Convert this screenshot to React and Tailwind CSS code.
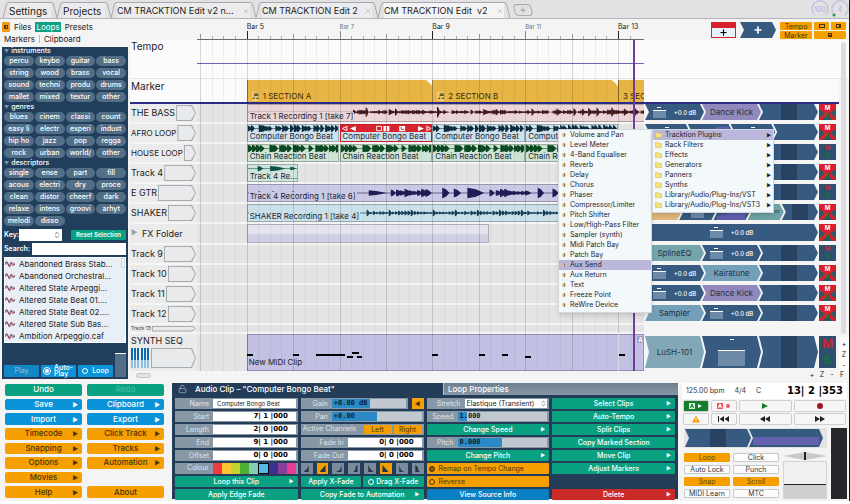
import { Fragment } from 'react';
import clsx from 'clsx';
import { ChevronsUpDown, LockOpen, Plus, X } from 'lucide-react';

const FIRST_BAR = 3.93;
const BAR_SPAN = 9.63;
const barPos = (bar) => `${((bar - FIRST_BAR) / BAR_SPAN) * 100}%`;
const barWidth = (bars) => `${(bars / BAR_SPAN) * 100}%`;

const LIBRARY = [
    { title: 'instruments', tags: ['percu', 'keybo', 'guitar', 'bass', 'string', 'wood', 'brass', 'vocal', 'sound', 'techni', 'produ', 'drums', 'mallet', 'mixed', 'textur', 'other'] },
    { title: 'genres', tags: ['blues', 'cinem', 'classi', 'count', 'easy li', 'electr', 'experi', 'indust', 'hip ho', 'jazz', 'pop', 'regga', 'rock', 'urban', 'world/', 'other'] },
    { title: 'descriptors', tags: ['single', 'ense', 'part', 'fill', 'acous', 'electri', 'dry', 'proce', 'clean', 'distor', 'cheerf', 'dark', 'relaxe', 'intens', 'groovi', 'arhyt', 'melodi', 'disso'] },
];

const FILES = ['Abandoned Brass Stab...', 'Abandoned Orchestral...', 'Altered State Arpeggi...', 'Altered State Beat 01....', 'Altered State Beat 02....', 'Altered State Sub Bas...', 'Ambition Arpeggio.caf'];

const PLUGINS = ['Volume and Pan', 'Level Meter', '4-Band Equaliser', 'Reverb', 'Delay', 'Chorus', 'Phaser', 'Compressor/Limiter', 'Pitch Shifter', 'Low/High-Pass Filter', 'Sampler (synth)', 'Midi Patch Bay', 'Patch Bay', 'Aux Send', 'Aux Return', 'Text', 'Freeze Point', 'ReWire Device'];

const FOLDERS = ['Tracktion Plugins', 'Rack Filters', 'Effects', 'Generators', 'Panners', 'Synths', 'Library/Audio/Plug-Ins/VST', 'Library/Audio/Plug-Ins/VST3'];

// a wave is a list of [x, amplitude, decay length]
const noise = (n) => {
    const v = Math.sin(n * 127.1 + 3.7) * 43758.5453;
    return v - Math.floor(v);
};

const bongoHits = [0, 3, 11, 13, 15, 18, 21, 28, 31, 35, 38, 43, 47, 50, 55, 58, 61, 67, 70, 74, 79, 82, 85, 89].map((x, i) => [x, 3 + noise(i) * 2, 4]);
const chainHits = [0, 4, 8, 12, 22, 24, 26, 32, 34, 36, 40, 46, 48, 50, 54, 62, 69, 72, 74, 78, 83, 86, 90].map((x, i) => [x, 4 + noise(i + 30), 5]);

const bassHits = [];
for (let x = 100; x < 396; x += 2) {
    if ([114, 132, 190, 192, 210, 214, 286, 288, 312, 372].includes(x)) continue;
    bassHits.push([x, 1 + noise(x) * (noise(x + 9) > 0.85 ? 6 : 2), 3]);
}
const guitarHits = [[10, 2, 4], [23, 2, 4], [42, 2, 4], [115, 3, 17], [136, 4, 5], [185, 6, 7], [196, 5, 7], [209, 6, 16], [230, 4, 5], [276, 6, 6], [290, 5, 6], [304, 6, 10], [318, 3, 5], [370, 5, 6], [384, 4, 8]];
for (let x = 141; x < 172; x += 4) guitarHits.push([x, 2 + noise(x) * 3, 6]);
for (let x = 236; x < 266; x += 4) guitarHits.push([x, 2 + noise(x) * 3, 6]);
const shakerHits = [];
for (let x = 113; x < 396; x += 3) shakerHits.push([x, x % 21 === 8 ? 4 : 1 + noise(x) * 2, 3]);

const MS_ON = 'on';
const MS_OFF = 'off';

const TRACKS = [
    {
        name: 'THE BASS', ms: MS_OFF, rack: [{ kind: 'vol' }, { kind: 'plugin', label: 'Dance Kick', color: 'bg-[#9188bd]' }, { kind: 'meter' }],
        clips: [{ at: 5, len: 9, label: 'Track 1 Recording 1 [take 7]', color: 'bg-[#ecd5d8]', ink: '#421a1c', hits: bassHits, span: 396, mid: 8 }],
    },
    {
        name: 'AFRO LOOP', small: true, ms: MS_OFF, rack: [{ kind: 'fader' }, { kind: 'curve' }, { kind: 'fader' }, { kind: 'blank' }],
        clips: [5, 7, 9, 11].map((at) => ({ at, len: 2, label: 'Computer Bongo Beat', color: 'bg-[#cfe2ec]', ink: '#0d2c40', hits: bongoHits, span: 93, mid: 4, selected: at === 7 })),
    },
    {
        name: 'HOUSE LOOP', small: true, ms: MS_ON, rack: [{ kind: 'vol' }, { kind: 'blank' }, { kind: 'meter' }],
        clips: [5, 7, 9, 11].map((at) => ({ at, len: 2, label: 'Chain Reaction Beat', color: 'bg-[#cfe4d4]', ink: '#0b4a20', hits: chainHits, span: 93, mid: 4 })),
    },
    {
        name: 'Track 4', ms: MS_OFF, rack: [{ kind: 'vol' }, { kind: 'plugin', label: '', color: 'bg-[#6fa3a8]' }, { kind: 'meter' }],
        clips: [{ at: 5, len: 1.1, label: 'Track 4 Re...', color: 'bg-[#cfe5e0]', ink: '#0d5245', hits: [[10, 3, 6], [23, 3, 16], [44, 2, 6]], span: 51, mid: 4 }],
    },
    {
        name: 'E GTR', ms: MS_ON, rack: [{ kind: 'vol' }, { kind: 'plugin', label: '', color: 'bg-[#6fa3a8]' }, { kind: 'meter' }],
        clips: [{ at: 5, len: 9, label: 'Track 4 Recording 1 [take 6]', color: 'bg-[#cbcae6]', ink: '#1f1c56', hits: guitarHits, span: 396, mid: 9 }],
    },
    {
        name: 'SHAKER', ms: MS_OFF, rack: [{ kind: 'plugin', label: '', color: 'bg-[#e3b77c]' }, { kind: 'fader' }, { kind: 'curve' }, { kind: 'plugin', label: 'Compressor', tiny: true, color: 'bg-[#6fa3a8]' }, { kind: 'meter' }],
        clips: [{ at: 5, len: 9, label: 'SHAKER Recording 1 [take 4]', color: 'bg-[#cbe1ea]', ink: '#143c54', hits: shakerHits, span: 396, mid: 9 }],
    },
    { name: 'FX Folder', folder: true, ms: MS_OFF, rack: [{ kind: 'vol' }], clips: [{ at: 5, len: 5.22, ghost: true }] },
    { name: 'Track 9', ms: MS_ON, rack: [{ kind: 'plugin', label: 'SplineEQ', color: 'bg-[#74a5ad]' }, { kind: 'vol' }, { kind: 'meter' }], clips: [] },
    { name: 'Track 10', ms: MS_OFF, rack: [{ kind: 'vol' }, { kind: 'plugin', label: 'Kairatune', color: 'bg-[#739fb8]' }, { kind: 'meter' }], clips: [] },
    { name: 'Track 11', ms: MS_OFF, rack: [{ kind: 'vol' }, { kind: 'plugin', label: 'Dance Kick', color: 'bg-[#9188bd]' }, { kind: 'meter' }], clips: [] },
    { name: 'Track 12', ms: MS_OFF, rack: [{ kind: 'plugin', label: 'Sampler', color: 'bg-[#739fb8]' }, { kind: 'vol' }, { kind: 'meter' }], clips: [] },
];

const NOTES = [[5, 0.13, 20], [6, 0.13, 20], [6.5, 0.62, 20], [7.17, 0.13, 22], [7.28, 0.14, 18], [7.37, 0.12, 22], [9, 0.13, 20], [10, 0.13, 20], [10.5, 0.13, 20], [11, 0.13, 22], [13.02, 0.13, 20]];

function Wave({ hits, span, mid, ink }) {
    return (
        <svg className="absolute inset-0 w-full h-full" viewBox={`0 0 ${span} 18`} preserveAspectRatio="none" aria-hidden="true">
            <path d={`M0 ${mid}H${span}`} stroke={ink} strokeWidth="1" opacity="0.6" />
            <path fill={ink} d={hits.map(([x, a, l]) => `M${x} ${mid - a}L${x + l / 2} ${mid - a * 0.7}L${x + l} ${mid}L${x + l / 2} ${mid + a * 0.7}L${x} ${mid + a}Z`).join('')} />
        </svg>
    );
}

function EdgeLeft() {
    return (
        <svg className="w-[6px] h-full shrink-0" viewBox="0 0 6 16" preserveAspectRatio="none" aria-hidden="true">
            <path d="M0 16L3.5 2Q4 0.5 6 0.5" fill="none" stroke="#a9a9ab" />
        </svg>
    );
}

function Tab({ label, active, closable, className }) {
    return (
        <div className={clsx('flex h-4 min-w-0', className)}>
            <EdgeLeft />
            <div className={clsx('flex-1 min-w-0 flex items-center justify-between border-t border-[#a9a9ab]', active ? 'bg-[#f4f4f4]' : 'bg-[#ececee]')}>
                <button className={clsx('leading-3 text-[#222] whitespace-pre', closable ? 'text-[9px]' : 'text-[10px]')}>{label}</button>
                {closable && <button aria-label="Close tab"><X className="w-2 h-2 text-[#b5b5b5]" /></button>}
            </div>
            <div className="-scale-x-100 flex"><EdgeLeft /></div>
        </div>
    );
}

function Gauge({ value, tick }) {
    return (
        <div className="relative w-[18px] h-[18px] flex items-center justify-center">
            <svg className="absolute inset-0 w-full h-full" viewBox="0 0 18 18" aria-hidden="true">
                <path d="M4 15A8 8 0 1 1 14 15" fill="none" stroke="#b3b0d6" strokeWidth={tick ? 2 : 1} strokeDasharray={tick ? '1 1' : 'none'} />
                {tick && <circle cx="3" cy="15" r="1.5" fill="#1f9a4a" />}
            </svg>
            <span className="text-[7px] leading-none text-[#b3b0d6]">{value}</span>
        </div>
    );
}

function Header() {
    return (
        <header className="flex items-end h-[19px] bg-[#e2e2e4] border-b border-[#b4b4b6]">
            <nav className="flex flex-1 min-w-0 pl-[3px]">
                <Tab label="Settings" className="w-[54px]" />
                <Tab label="Projects" className="w-[54px]" />
                <Tab label="CM TRACKTION Edit v2 n..." closable className="w-[145px]" />
                <Tab label="CM TRACKTION Edit 2" closable className="w-[122px]" />
                <Tab label="CM TRACKTION Edit  v2" active closable className="w-[132px]" />
                <button aria-label="New tab" className="ml-1 mt-0.5 w-[18px] h-3 skew-x-12 border border-[#a9a9ab] rounded-sm flex items-center justify-center">
                    <Plus className="w-2 h-2 text-[#8d8d90]" />
                </button>
            </nav>
            <div className="flex gap-0.5">
                <Gauge value="100" />
                <Gauge value="4" tick />
            </div>
        </header>
    );
}

function Sidebar() {
    return (
        <aside className="w-[128px] shrink-0 pl-0.5 flex flex-col">
            <div className="pt-0.5 h-7 text-[8px] leading-3 text-[#222]">
                <div className="flex items-center gap-1">
                    <span className="w-2 h-[10px] bg-[#ef9b0f] rounded-[1px] flex items-center justify-center">
                        <span className="w-1 h-1 border border-[#5c3a00] border-l-2"></span>
                    </span>
                    <button>Files</button>
                    <button className="bg-[#0aa182] text-white px-px h-[10px] leading-[10px]">Loops</button>
                    <button>Presets</button>
                </div>
                <div className="flex items-center gap-1 pl-0.5">
                    <button>Markers</button>
                    <span className="w-px h-2 bg-[#bbb]"></span>
                    <button>Clipboard</button>
                </div>
            </div>
            <div className="bg-[#213f5c] flex-1 flex flex-col px-0.5 text-white">
                {LIBRARY.map((group) => (
                    <section key={group.title}>
                        <h2 className="h-2 flex items-center text-[7px] leading-[8px] font-medium"><span className="text-[#7b93a8] pr-0.5 text-[5px]">▼</span>{group.title}</h2>
                        <div className="grid grid-cols-4 gap-x-px">
                            {group.tags.map((tag, idx) => (
                                <div key={idx} className="flex h-3 py-px">
                                    <button className="w-full h-[10px] rounded-full bg-[#536f88] text-[7px] leading-[10px] font-medium">{tag}</button>
                                </div>
                            ))}
                        </div>
                    </section>
                ))}
                <div className="flex items-center h-[14px] mt-px text-[7px] font-semibold">
                    <label htmlFor="key" className="w-[15px]">Key:</label>
                    <div className="relative w-[43px] h-3 bg-white">
                        <select id="key" className="appearance-none w-full h-full block"></select>
                        <ChevronsUpDown className="absolute right-px top-0.5 w-2 h-2 text-[#444] pointer-events-none" />
                    </div>
                    <button className="ml-auto w-[55px] h-[10px] bg-[#0aa182] rounded-[1px] text-[6px] leading-[10px]">Reset Selection</button>
                </div>
                <div className="flex items-center h-[14px] gap-0.5 text-[7px] font-semibold">
                    <label htmlFor="search">Search:</label>
                    <input id="search" className="flex-1 min-w-0 h-3 bg-white text-black" />
                </div>
                <div className="mt-px bg-[#e9eff6] border border-white flex">
                    <ul className="flex-1 min-w-0 text-[8px] leading-3 text-[#222]">
                        {FILES.map((file) => (
                            <li key={file} className="flex items-center h-3 gap-1 whitespace-nowrap">
                                <svg className="w-[10px] h-[8px] shrink-0" viewBox="0 0 10 8" fill="none" aria-hidden="true">
                                    <path d="M0 4Q1.500 -1 3 4T5.500 5.500T7.500 3T10 5" stroke="#c23a4a" />
                                    <path d="M0 5L2 2L4 6L6 2L8 6L10 3" stroke="#4a4a66" strokeWidth="0.7" />
                                </svg>
                                <button>{file}</button>
                            </li>
                        ))}
                    </ul>
                    <div className="w-1 h-[10px] border border-[#ccd3da] bg-[#f2f5f9]"></div>
                </div>
                <div className="flex-1 flex items-end gap-0.5 pb-0.5 text-[7px] leading-[6px] font-medium">
                    <button className="w-[35px] h-3 rounded-[1px] bg-[#1187c4] text-[#7dbbe0]">Play</button>
                    <label className="w-[35px] h-3 rounded-[1px] bg-[#0b93d9] flex items-center justify-center gap-1">
                        <input type="checkbox" defaultChecked className="appearance-none w-[6px] h-[6px] rounded-full border border-[#0b93d9] bg-white outline outline-white" />
                        <span>Auto-<br />Play</span>
                    </label>
                    <label className="w-[35px] h-3 rounded-[1px] bg-[#0b93d9] flex items-center justify-center gap-1">
                        <input type="checkbox" className="appearance-none w-[6px] h-[6px] rounded-full border border-white" />
                        Loop
                    </label>
                    <div className="relative flex-1 self-stretch pt-[10px]">
                        <div className="h-full bg-[#536f88] border-t border-white"></div>
                        <input type="range" aria-label="Preview level" className="absolute inset-0 w-full h-full opacity-0" />
                    </div>
                </div>
            </div>
        </aside>
    );
}

const ARROW = '[clip-path:polygon(0_0,calc(100%-4px)_0,100%_50%,calc(100%-4px)_100%,0_100%,4px_50%)]';

function InputSlot({ className }) {
    return (
        <div className={clsx('bg-[#a8abb0] p-px [clip-path:polygon(0_0,calc(100%-4px)_0,100%_50%,calc(100%-4px)_100%,0_100%)]', className)}>
            <div className="w-full h-full bg-[#e8eaec] [clip-path:polygon(0_0,calc(100%-4px)_0,100%_50%,calc(100%-4px)_100%,0_100%)]"></div>
        </div>
    );
}

function RackItem({ item, tall }) {
    const { kind, label, color, tiny } = item;
    return (
        <div className={clsx('flex-1 min-w-0 h-full flex items-center justify-center gap-2 -mr-0.5', ARROW, color || 'bg-[#375b80]')}>
            {kind === 'plugin' && <span className={clsx('text-[#23323f] whitespace-nowrap', tiny ? 'text-[5px]' : 'text-[8px]')}>{label}</span>}
            {(kind === 'vol' || kind === 'fader') && (
                <div className={clsx('flex flex-col items-center', tall ? 'w-[27px]' : 'w-[13px]')}>
                    <span className="w-1 h-px bg-white mb-0.5"></span>
                    <span className={clsx('w-full bg-[#6d8aa8] border-t border-white', tall ? 'h-4 mt-2' : 'h-2')}></span>
                </div>
            )}
            {kind === 'vol' && !tall && <span className="text-[6px] font-medium text-white whitespace-nowrap">+0.0 dB</span>}
            {kind === 'curve' && (
                <svg className="w-full h-full px-1" viewBox="0 0 30 16" preserveAspectRatio="none" aria-hidden="true">
                    <path d="M0 12L14 9Q20 0 30 3V16H0Z" fill="#5f5fae" />
                </svg>
            )}
            {kind === 'meter' && <div className="w-4 h-full bg-[#2a4262]"></div>}
        </div>
    );
}

function MuteSolo({ state, tall }) {
    const off = state === MS_OFF;
    return (
        <div className={clsx('relative w-[17px] shrink-0 ml-[3px] flex flex-col', off ? 'bg-[#2b5a62]' : 'bg-[#2d4f70]')}>
            {off && (
                <svg className="absolute inset-0 w-full h-full" viewBox="0 0 17 16" preserveAspectRatio="none" aria-hidden="true">
                    <path d="M0 0H17V5L11 9L17 14V16H14L8.500 11L3 16H0V14L6 9L0 5Z" fill="#d8202c" />
                </svg>
            )}
            <button className={clsx('relative flex-1 font-bold leading-none', tall ? 'text-[12px]' : 'text-[6px]', off ? 'text-white' : 'text-[#d8202c]')}>M</button>
            <button className={clsx('relative flex-1 font-bold leading-none', tall ? 'text-[12px]' : 'text-[6px]', 'text-[#16763a]')}>S</button>
        </div>
    );
}

function Clip({ clip }) {
    if (clip.ghost) {
        return (
            <div className="absolute inset-y-0 border border-[#aeb0be] bg-linear-to-b from-[#e4e4ea] from-50% to-[#d0d0e4] to-50%" style={{ left: barPos(clip.at), width: barWidth(clip.len) }}></div>
        );
    }
    return (
        <div className={clsx('absolute inset-y-0 border overflow-hidden', clip.color, clip.selected ? 'border-[#c4202c] z-10' : 'border-black/25')} style={{ left: barPos(clip.at), width: barWidth(clip.len) }}>
            <Wave {...clip} />
            {clip.selected && (
                <svg className="absolute inset-x-0 top-0 w-full h-[7px]" viewBox="0 0 92 8" preserveAspectRatio="none" aria-hidden="true">
                    <path d="M0 0H92V8H0Z" fill="#d8232e" />
                    <path d="M6 1.500V6.500L1.500 4ZM87 1.500V6.500L91 4Z" fill="none" stroke="#fff" />
                    <path d="M15 1V7L9 4ZM78 1V7L84 4ZM43 1H49V7H43ZM59 1H65V7H59Z" fill="#fff" />
                    <path d="M36 1.500H41V6.500H36Z" fill="#d8232e" stroke="#fff" />
                    <path d="M61 2V5H64M46 1V7" stroke="#d8232e" fill="none" />
                </svg>
            )}
            <span className={clsx('absolute left-px bottom-0 px-px text-[8px] leading-[9px] text-[#1d2733] whitespace-nowrap', clip.color)}>{clip.label}</span>
        </div>
    );
}

function TrackRow({ track }) {
    return (
        <div className={clsx('flex bg-[#f5f5f5]', track.folder ? 'h-[21px]' : 'h-5')}>
            <div className="w-[67px] shrink-0 mb-0.5 pl-px pr-px flex items-center gap-px bg-[#ebebeb]">
                {track.folder && <span className="w-[10px] text-[7px] text-[#a5a5a5]">▶</span>}
                <span className={clsx('whitespace-nowrap text-[#222]', track.small ? 'text-[8px]' : 'text-[9px]')}>{track.name}</span>
                {!track.folder && <InputSlot className="flex-1 h-4" />}
            </div>
            <div className="relative flex-1 min-w-0 mb-0.5 bg-[#e4e4e4] overflow-hidden">
                {track.clips.map((clip, idx) => <Clip key={idx} clip={clip} />)}
            </div>
            <div className="w-[195px] shrink-0 pl-px pr-[3px] pb-1 flex">
                {track.rack.map((item, idx) => <RackItem key={idx} item={item} />)}
                <MuteSolo state={track.ms} />
            </div>
        </div>
    );
}

function Ruler() {
    return (
        <div className="flex h-[21px]">
            <div className="w-[67px] shrink-0"></div>
            <div className="relative flex-1 min-w-0 border-b border-[#6b6b6b] text-[#222]">
                {Array.from({ length: 38 }, (_, i) => 4 + i / 4).map((bar) => (
                    <span key={bar} className={clsx('absolute bottom-0 w-px', (bar - 1) % 4 === 0 ? 'h-2 bg-[#222]' : (bar - 1) % 2 === 0 ? 'h-2 bg-[#8a8a8a]' : bar % 1 === 0 ? 'h-[5px] bg-[#999]' : 'h-[3px] bg-[#aaa]')} style={{ left: barPos(bar) }}></span>
                ))}
                {[5, 7, 9, 11, 13].map((bar) => (
                    <span key={bar} className={clsx('absolute bottom-2 leading-[9px] whitespace-nowrap', (bar - 1) % 4 === 0 ? 'text-[7px]' : 'text-[6px] text-[#6f7680]')} style={{ left: barPos(bar) }}>Bar {bar}</span>
                ))}
            </div>
            <div className="w-[205px] shrink-0 flex items-start gap-1 pt-[3px] pr-[3px] justify-end">
                <button aria-label="Add track" className="w-[25px] h-4 border border-[#d8232e] bg-[#e7f2fb] flex flex-col items-center">
                    <span className="w-full h-[5px] bg-[#d8232e]"></span>
                    <Plus className="w-[9px] h-[9px] text-black" strokeWidth={3} />
                </button>
                <button aria-label="Add plugin" className={clsx('w-9 h-4 bg-[#375b80] text-white flex items-center justify-center', ARROW)}>
                    <Plus className="w-[10px] h-[10px]" strokeWidth={4} />
                </button>
                <div className="w-[66px] grid grid-cols-[32px_15px_15px] gap-x-0.5 gap-y-px text-[7px] leading-[7px] text-[#4d3300]">
                    <button className="h-[8px] rounded-[1px] bg-[#f59f00]">Tempo</button>
                    <button aria-label="Clip view" className="rounded-[1px] bg-[#f59f00] flex items-center justify-center"><span className="w-[6px] h-1 border border-[#4d3300]"></span></button>
                    <button aria-label="Side view" className="rounded-[1px] bg-[#f59f00] flex items-center justify-center"><span className="w-[5px] h-1 border border-r-2 border-[#4d3300]"></span></button>
                    <button className="h-[8px] rounded-[1px] bg-[#f59f00]">Marker</button>
                    <button aria-label="Bottom view" className="col-span-2 rounded-[1px] bg-[#f59f00] flex items-center justify-center"><span className="w-1 h-1 border border-b-2 border-[#4d3300]"></span></button>
                </div>
            </div>
        </div>
    );
}

function GridLines() {
    return (
        <div className="absolute left-[67px] right-[205px] top-[21px] bottom-2 pointer-events-none">
            {Array.from({ length: 38 }, (_, i) => 4 + i / 4).map((bar) => (
                <span key={bar} className={clsx('absolute inset-y-0 w-px', bar % 1 === 0 ? 'bg-black/15' : 'bg-black/5')} style={{ left: barPos(bar) }}></span>
            ))}
            <span className="absolute inset-y-0 w-0.5 bg-[#6f3c97] z-20" style={{ left: barPos(13.33) }}></span>
        </div>
    );
}

function Menu({ items, active, icon, arrows, className }) {
    return (
        <ul role="menu" className={clsx('pb-0.5 bg-[#f3f8fb] border border-[#d2d8dc] shadow-md text-[7px] leading-[10px] text-[#1c2730]', className)}>
            {items.map((item) => (
                <li key={item} role="none">
                    <button role="menuitem" className={clsx('w-full h-[10px] flex items-center px-0.5 gap-[3px] text-left whitespace-nowrap', item === active && 'bg-[#bab6dc]')}>
                        {icon}
                        <span className="flex-1">{item}</span>
                        {arrows && <span className="text-[5px]">▶</span>}
                    </button>
                </li>
            ))}
        </ul>
    );
}

const plugIcon = (
    <svg className="w-[6px] h-[6px] shrink-0" viewBox="0 0 6 6" aria-hidden="true">
        <ellipse cx="3" cy="3" rx="1.800" ry="2.300" fill="#e0c98a" />
        <path d="M2.500 1.500H4V4.500H2.500L3.200 3Z" fill="#8a703c" />
    </svg>
);

const folderIcon = (
    <svg className="w-[7px] h-[6px] shrink-0" viewBox="0 0 7 6" aria-hidden="true">
        <path d="M0.500 0.500H3L4 1.500H6.500V5.500H0.500Z" fill="#f4e27c" stroke="#d8bf4a" strokeWidth="0.6" />
    </svg>
);

function Arranger() {
    return (
        <main className="relative flex-1 min-w-0 ml-0.5">
            <Ruler />
            <div className="relative">
                <div className="flex h-[39px] bg-[#fbfbfb] border-b border-[#e6e6e6]">
                    <div className="w-[67px] pl-px text-[10px] leading-[13px] text-[#222]">Tempo</div>
                    <div className="flex-1 mr-[205px] h-6 border-b border-[#6a64b4]"></div>
                </div>
                <div className="flex h-[23px] bg-[#fbfbfb] mr-[10px]">
                    <div className="w-[67px] shrink-0 pl-px text-[10px] leading-[15px] text-[#222]">Marker</div>
                    <div className="relative flex-1 overflow-hidden">
                        {[[5, '1 SECTION A'], [9, '2 SECTION B'], [13, '3 SEC']].map(([bar, label]) => (
                            <div key={bar} className="absolute top-px bottom-0 flex items-end gap-1 px-1 bg-[#e6b544] border-l border-[#9c7a28] [clip-path:polygon(0_0,calc(100%-6px)_0,100%_6px,100%_100%,0_100%)] text-[8px] leading-[12px] text-[#3a2b08]" style={{ left: barPos(bar), width: barWidth(4) }}>
                                {bar < 13 && <span className="w-[7px] h-[9px] mb-px bg-[#f0cd74] text-[8px] leading-[9px] font-['DejaVu_Sans',sans-serif]">♬</span>}
                                {label}
                            </div>
                        ))}
                    </div>
                    <div className="w-[195px] shrink-0"></div>
                </div>
                <div className="h-0.5 bg-[#2b2a86] mr-[10px]"></div>
                <div className="mr-[10px]">
                    {TRACKS.map((track) => <TrackRow key={track.name} track={track} />)}
                    <div className="flex h-[9px] bg-[#f5f5f5]">
                        <div className="w-[67px] shrink-0 mb-0.5 px-px flex items-center gap-px bg-[#ebebeb]">
                            <span className="text-[5px] leading-none text-[#333]">Track 13</span>
                            <InputSlot className="flex-1 h-[6px]" />
                        </div>
                        <div className="flex-1 mb-0.5 bg-[#e4e4e4]"></div>
                        <div className="w-[195px] shrink-0"></div>
                    </div>
                    <div className="flex h-[37px] bg-[#f5f5f5]">
                        <div className="w-[67px] shrink-0 pl-px pr-px bg-[#ebebeb]">
                            <div className="text-[9px] leading-[14px] text-[#222]">SYNTH SEQ</div>
                            <div className="flex h-5">
                                <div className="w-5 flex justify-between pr-px">
                                    {[0, 1, 2, 3, 4, 5].map((k) => <span key={k} className="w-[3px] bg-linear-to-b from-[#1268a8] from-60% to-[#8fbfe0] to-60% border-r border-[#e8f2fa]"></span>)}
                                </div>
                                <InputSlot className="flex-1 h-5" />
                            </div>
                        </div>
                        <div className="relative flex-1 min-w-0 bg-[#e4e4e4] overflow-hidden">
                            <div className="absolute inset-y-0 right-0 bg-[#c2c1e3] border border-[#8f8eb6]" style={{ left: barPos(5) }}></div>
                            {NOTES.map(([bar, len, y]) => <span key={bar} className="absolute h-0.5 bg-black" style={{ left: barPos(bar), width: barWidth(len), top: y }}></span>)}
                            <span className="absolute inset-y-0 w-px bg-white" style={{ left: barPos(13) }}></span>
                            <span className="absolute bottom-1 text-[8px] leading-[9px] text-[#222] pl-0.5" style={{ left: barPos(5) }}>New MIDI Clip</span>
                            <span className="absolute right-0 top-0.5 w-[7px] h-[7px] bg-[#9d9cc9] text-white text-[6px] leading-[7px] font-bold text-center">A</span>
                        </div>
                        <div className="w-[195px] shrink-0 pl-px pr-[3px] pt-0.5 pb-[3px] flex">
                            <RackItem tall item={{ kind: 'plugin', label: 'LuSH-101', color: 'bg-[#82a8b8]' }} />
                            <RackItem tall item={{ kind: 'vol' }} />
                            <RackItem tall item={{ kind: 'meter' }} />
                            <MuteSolo state={MS_ON} tall />
                        </div>
                    </div>
                </div>
                <div className="absolute right-[3px] top-[2px] w-[5px] h-[292px] rounded-full bg-[#dcdcdf]"></div>
                <div className="absolute right-0 bottom-0 w-[10px] h-[33px] text-[7px] leading-[11px] text-[#222] flex flex-col bg-[#fbfbfb]">
                    <button>+</button>
                    <button>Z</button>
                    <button>-</button>
                </div>
            </div>
            <div className="flex h-2 items-center justify-between pl-[6px] text-[7px] leading-[8px] text-[#222]">
                <span className="w-[15px] h-[5px] rounded-full border border-[#c5c5c8] bg-[#e4e4e6]"></span>
                <div className="flex gap-1 pr-1">
                    {['+', 'Z', '-', 'F'].map((k) => <button key={k} className="w-[6px]">{k}</button>)}
                </div>
            </div>
            <GridLines />
            <div className="absolute top-[110px] right-[75px] flex items-start z-30">
                <Menu items={PLUGINS} active="Aux Send" icon={plugIcon} className="w-[94px]" />
                <Menu items={FOLDERS} active="Tracktion Plugins" icon={folderIcon} arrows className="w-[122px]" />
            </div>
        </main>
    );
}

const MENU_BUTTONS = [
    ['Undo', 'bg-[#0aa182] text-white', false], ['Redo', 'bg-[#0aa182] text-[#3fbda2]', false],
    ['Save', 'bg-[#0b93d9] text-white', true], ['Clipboard', 'bg-[#0b93d9] text-white', true],
    ['Import', 'bg-[#0b93d9] text-white', true], ['Export', 'bg-[#0b93d9] text-white', true],
    ['Timecode', 'bg-[#f59f00] text-[#4d3300]', true], ['Click Track', 'bg-[#f59f00] text-[#4d3300]', true],
    ['Snapping', 'bg-[#f59f00] text-[#4d3300]', true], ['Tracks', 'bg-[#f59f00] text-[#4d3300]', true],
    ['Options', 'bg-[#f59f00] text-[#4d3300]', true], ['Automation', 'bg-[#f59f00] text-[#4d3300]', true],
    ['Movies', 'bg-[#f59f00] text-[#4d3300]', true], null,
    ['Help', 'bg-[#f59f00] text-[#4d3300]', true], ['About', 'bg-[#f59f00] text-[#4d3300]', false],
];

function Action({ label, arrow, color = 'bg-[#0aa182]' }) {
    return (
        <button className={clsx('relative w-full h-full rounded-[1px] text-white font-medium whitespace-nowrap', color)}>
            {label}
            {arrow && <span className="absolute right-1 inset-y-0 flex items-center text-[5px]">▶</span>}
        </button>
    );
}

function Field({ label, id, value, wide, plain }) {
    return (
        <div className="flex h-full min-w-0 bg-[#8797a6] pr-0.5 py-px">
            <label htmlFor={id} className={clsx('shrink-0 text-right pr-1 text-[#dfe5eb]', wide ? 'w-[47px]' : 'w-[38px]')}>{label}</label>
            <input id={id} defaultValue={value} className={clsx('flex-1 min-w-0 w-0 bg-white text-[#222]', plain ? 'text-[6px] pl-1' : "pr-2 text-right text-[7px] text-black font-bold font-['DejaVu_Sans',sans-serif]")} />
        </div>
    );
}

function ValueSlider({ label, id, value, fill }) {
    return (
        <div className="flex h-full min-w-0 bg-[#8797a6] pr-0.5 py-px">
            <label htmlFor={id} className="w-[31px] shrink-0 text-right pr-1 text-[#dfe5eb]">{label}</label>
            <div className="relative flex-1 bg-[#c2c8cf]">
                <div className="absolute inset-y-0 left-0 bg-[#2b8ac6]" style={{ width: fill }}></div>
                <span className="relative flex items-center h-full pl-0.5 text-[7px] text-[#0d2233] font-bold font-['DejaVu_Sans_Mono',monospace]">{value}</span>
                <input id={id} type="range" className="absolute inset-0 w-full h-full opacity-0" />
            </div>
        </div>
    );
}

const SWATCHES = ['bg-[#ee3b40]', 'bg-[#fdc530]', 'bg-[#c3d32f]', 'bg-[#4fb131]', 'bg-[#82cdb5]', 'bg-[#57b9ea] border border-black', 'bg-[#3c3090]', 'bg-[#8a4099]', 'bg-[#e63c93]'];

const FADES = ['M0 8Q5 5 6 0V8Z', 'M0 8L7 0V8Z', 'M0 8Q6 7 7 0V8Z', 'M1 8Q5 7 5 1L7 0V8Z', 'M1 8V0Q2 4 7 8Z', 'M0 8V0L7 8Z', 'M1 8V0Q2 7 7 8Z', 'M1 8V0Q4 1 5 7L7 8Z'];

function ClipPanel() {
    return (
        <section className="flex-1 min-w-0 bg-[#233d58] flex flex-col">
            <div className="flex h-[15px] text-white text-[8px] font-medium">
                <h2 className="w-[271px] flex items-center gap-2 pl-1.5"><LockOpen className="w-[9px] h-[10px] text-[#9fb0c0]" />Audio Clip – "Computer Bongo Beat"</h2>
                <h2 className="flex-1 flex items-center pl-1 bg-linear-to-b from-[#6d7e8e] to-[#8797a5] border-l border-[#b9c3cc]">Loop Properties</h2>
            </div>
            <div className="flex-1 grid grid-cols-4 gap-x-[3px] px-[3px] pt-[3px] pb-0.5 text-[7px] leading-[9px]">
                <div className="min-w-0 grid grid-cols-1 grid-rows-8 gap-y-0.5">
                    <Field label="Name" id="clip-name" value="Computer Bongo Beat" plain />
                    <Field label="Start" id="clip-start" value="7| 1 |000" />
                    <Field label="Length" id="clip-length" value="2| 0 |000" />
                    <Field label="End" id="clip-end" value="9| 1 |000" />
                    <Field label="Offset" id="clip-offset" value="0| 0 |000" />
                    <div className="flex bg-[#8797a6] pr-0.5">
                        <span className="w-[38px] shrink-0 text-right pr-1 text-[#dfe5eb]">Colour</span>
                        {SWATCHES.map((c) => <button key={c} aria-label="Clip colour" className={clsx('flex-1', c)}></button>)}
                    </div>
                    <Action label="Loop this Clip" arrow />
                    <Action label="Apply Edge Fade" />
                </div>
                <div className="min-w-0 grid grid-cols-1 grid-rows-8 gap-y-0.5">
                    <div className="flex gap-1">
                        <div className="flex-1"><ValueSlider label="Gain" id="gain" value="+0.00 dB" fill="52%" /></div>
                        <button aria-label="Mute clip" className="w-3 bg-[#f59f00] text-[6px] text-[#4d3300]">◀</button>
                    </div>
                    <ValueSlider label="Pan" id="pan" value="+0.00" fill="50%" />
                    <div className="flex gap-0.5 bg-[#8797a6] py-px pr-0.5 leading-[8px]">
                        <span className="flex-1 pl-0.5 text-[#dfe5eb] whitespace-nowrap">Active Channels</span>
                        <button className="w-7 bg-[#f59f00] text-[#4d3300]">Left</button>
                        <button className="w-7 bg-[#f59f00] text-[#4d3300]">Right</button>
                    </div>
                    <Field label="Fade In" id="fade-in" value="0| 0 |000" wide />
                    <Field label="Fade Out" id="fade-out" value="0| 0 |000" wide />
                    <div className="grid grid-cols-8 gap-x-1">
                        {FADES.map((d, idx) => (
                            <button key={d} aria-label="Fade shape" className={clsx('flex items-center justify-center', idx === 1 || idx === 5 ? 'bg-[#f59f00]' : 'bg-[#7a8b9b]')}>
                                <svg className="w-[7px] h-[7px]" viewBox="0 0 7 8" aria-hidden="true"><path d={d} fill="#233547" /></svg>
                            </button>
                        ))}
                    </div>
                    <div className="grid grid-cols-2 gap-x-0.5">
                        <Action label="Apply X-Fade" />
                        <label className="bg-[#0aa182] rounded-[1px] text-white font-medium flex items-center justify-center gap-0.5 whitespace-nowrap">
                            <input type="checkbox" className="appearance-none w-[6px] h-[6px] rounded-full border border-white" />Drag X-Fade
                        </label>
                    </div>
                    <Action label="Copy Fade to Automation" arrow />
                </div>
                <div className="min-w-0 grid grid-cols-1 grid-rows-8 gap-y-0.5">
                    <div className="relative flex min-w-0 bg-[#8797a6] pr-0.5 py-px">
                        <label htmlFor="stretch" className="w-[38px] shrink-0 text-right pr-1 text-[#dfe5eb]">Stretch</label>
                        <select id="stretch" className="appearance-none flex-1 min-w-0 bg-white text-[#222] pl-0.5 leading-[8px]"><option>Elastique (Transient)</option></select>
                        <ChevronsUpDown className="absolute right-0.5 top-0.5 w-[7px] h-[7px] text-[#444] pointer-events-none" />
                    </div>
                    <ValueSlider label="Speed" id="speed" value="1.000" fill="11%" />
                    <Action label="Change Speed" arrow />
                    <ValueSlider label="Pitch" id="pitch" value="0.000" fill="50%" />
                    <Action label="Change Pitch" arrow />
                    {['Remap on Tempo Change', 'Reverse'].map((label, idx) => (
                        <label key={label} className="bg-[#f59f00] rounded-[1px] text-[#4d3300] flex items-center gap-1 pl-0.5">
                            <input type="checkbox" defaultChecked={idx === 0} className="appearance-none w-[6px] h-[6px] rounded-full border border-[#4d3300] checked:bg-[#8a5c00]" />{label}
                        </label>
                    ))}
                    <Action label="View Source Info" color="bg-[#0a80c2]" />
                </div>
                <div className="min-w-0 grid grid-cols-1 grid-rows-8 gap-y-0.5">
                    <Action label="Select Clips" arrow />
                    <Action label="Auto-Tempo" arrow />
                    <Action label="Split Clips" arrow />
                    <Action label="Copy Marked Section" />
                    <Action label="Move Clip" arrow />
                    <Action label="Adjust Markers" arrow />
                    <span></span>
                    <Action label="Delete" arrow color="bg-[#cb2b27]" />
                </div>
            </div>
        </section>
    );
}

const TOGGLES = [['Loop', true], ['Click', false], ['Auto Lock', false], ['Punch', false], ['Snap', true], ['Scroll', true], ['MIDI Learn', false], ['MTC', false]];

function TransportButton({ label, children, className }) {
    return (
        <button aria-label={label} className={clsx('h-3 flex items-center justify-center border border-[#cfcfd2] rounded-[2px]', className || 'bg-[#f6f6f7]')}>
            <svg className="h-2 w-4" viewBox="0 0 16 8" aria-hidden="true">{children}</svg>
        </button>
    );
}

function Transport() {
    return (
        <section className="w-[167px] shrink-0 flex flex-col pr-0.5">
            <div className="flex items-center justify-between bg-white h-4 px-1 text-[7px] text-[#333]">
                <span>125.00 bpm</span>
                <span>4/4</span>
                <span>C</span>
                <span className="pl-4 text-[10px] leading-none font-bold text-black font-['DejaVu_Sans',sans-serif] whitespace-pre">13| 2 |353</span>
            </div>
            <div className="grid grid-cols-[26px_26px_1fr_1fr] gap-x-0.5 gap-y-px pt-px px-px">
                <TransportButton label="Automation read" className="bg-[#137f2c]">
                    <path d="M1 1H7V7H1Z" fill="#d8f0dc" /><path d="M2.500 6L4 2L5.500 6M3 4.500H5" stroke="#137f2c" fill="none" /><path d="M10 2L14 4L10 6Z" fill="#fff" />
                </TransportButton>
                <TransportButton label="Automation write">
                    <path d="M1 1H7V7H1Z" fill="#ef5a66" /><path d="M2.500 6L4 2L5.500 6M3 4.500H5" stroke="#fff" fill="none" /><circle cx="12" cy="4" r="2" fill="#ef5a66" />
                </TransportButton>
                <TransportButton label="Play"><path d="M5 1L11 4L5 7Z" fill="#137f2c" /></TransportButton>
                <TransportButton label="Record"><circle cx="8" cy="4" r="3" fill="#a01420" /></TransportButton>
                <TransportButton label="Panic"><path d="M8 0.500L12 7.500H4Z" fill="#f59f00" /><path d="M8 3V5.500" stroke="#fff" /></TransportButton>
                <TransportButton label="Return to start"><path d="M2 1H3V7H2ZM8 1V7L3.500 4ZM13 1V7L8.500 4Z" fill="#222" /></TransportButton>
                <TransportButton label="Rewind"><path d="M8 1V7L3 4ZM13 1V7L8 4Z" fill="#222" /></TransportButton>
                <TransportButton label="Fast forward"><path d="M3 1V7L8 4ZM8 1V7L13 4Z" fill="#222" /></TransportButton>
            </div>
            <div className="flex flex-1 mt-[3px] gap-1 pl-0.5">
                <div className="flex-1 min-w-0 flex flex-col">
                    <div className="flex h-5 bg-[#e3e3e4] p-px pr-1">
                        <RackItem item={{ kind: 'meter' }} />
                        <div className={clsx('flex-1 bg-[#375b80] flex items-end px-1 pb-0.5', ARROW)}><span className="w-full h-2 bg-[#6461ae]"></span></div>
                    </div>
                    <div className="flex flex-1 gap-1 pt-1">
                        <div className="grid grid-cols-[46px_46px] gap-x-[3px] gap-y-[3px] content-start pt-px text-[7px] leading-[7px]">
                            {TOGGLES.map(([label, on]) => (
                                <label key={label} className={clsx('h-[9px] rounded-[1px] border text-center', on ? 'bg-[#f59f00] border-[#f59f00] text-[#6b4800]' : 'bg-[#fdfdfd] border-[#c5c8cc] text-[#333]')}>
                                    <input type="checkbox" defaultChecked={on} className="sr-only" />{label}
                                </label>
                            ))}
                        </div>
                        <div className="flex-1 flex flex-col gap-px">
                            <svg className="w-full h-2" viewBox="0 0 44 8" preserveAspectRatio="none" aria-hidden="true"><path d="M0 4L22 0L44 4L22 8Z" fill="#c9c9cb" /><path d="M22 0V8" stroke="#222" strokeWidth="2" /></svg>
                            <div className="relative flex-1 border border-[#d4d4d6] bg-linear-to-b from-[#f0f0f1] from-60% to-[#cfcfd1] to-60%">
                                <span className="absolute inset-x-0 top-[60%] h-px bg-[#222]"></span>
                                <input type="range" aria-label="Master level" className="absolute inset-0 w-full h-full opacity-0" />
                            </div>
                        </div>
                    </div>
                </div>
                <div className="w-4 bg-[#26272a]"></div>
            </div>
        </section>
    );
}

export default function App() {
    return (
        <div className="flex bg-[#f4f4f4] font-['Inter',sans-serif] cursor-default overflow-hidden">
            <div className="flex-1 min-w-0">
                <Header />
                <div className="flex">
                    <Sidebar />
                    <Arranger />
                </div>
                <footer className="flex h-[122px] pt-1 pb-0.5">
                    <div className="w-[159px] shrink-0 ml-[5px] mr-2 my-px grid grid-cols-2 grid-rows-8 gap-x-[5px] gap-y-[3px] text-[8px] font-medium">
                        {MENU_BUTTONS.map((b, idx) => (
                            <Fragment key={idx}>
                                {b ? (
                                    <button className={clsx('relative rounded-[2px] leading-[11px]', b[1])}>
                                        {b[0]}
                                        {b[2] && <span className="absolute right-1 inset-y-0 flex items-center text-[6px]">▶</span>}
                                    </button>
                                ) : <span></span>}
                            </Fragment>
                        ))}
                    </div>
                    <ClipPanel />
                    <div className="w-1 shrink-0"></div>
                    <Transport />
                </footer>
            </div>
            <div className="w-px bg-neutral-900"></div>
        </div>
    );
}
